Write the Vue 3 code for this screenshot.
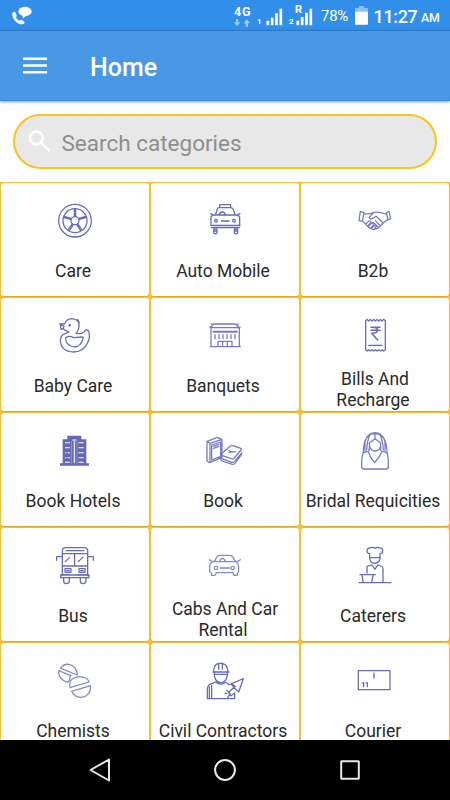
<script setup>
const categories = [
  { name: 'Care', box: '159 60 132 120', icon: 'wheel' },
  { name: 'Auto Mobile', box: '609 60 132 120', icon: 'taxi' },
  { name: 'B2b', box: '384 60 132 120', icon: 'hands' },
  { name: 'Baby Care', box: '159 60 132 120', icon: 'duck' },
  { name: 'Banquets', box: '609 60 132 120', icon: 'hall' },
  { name: 'Bills And Recharge', box: '384 60 132 120', icon: 'bill', two: true },
  { name: 'Book Hotels', box: '159 60 132 120', icon: 'hotel' },
  { name: 'Book', box: '609 60 132 120', icon: 'book' },
  { name: 'Bridal Requicities', box: '384 60 132 120', icon: 'bride' },
  { name: 'Bus', box: '159 60 132 120', icon: 'bus' },
  { name: 'Cabs And Car Rental', box: '609 60 132 120', icon: 'car', two: true },
  { name: 'Caterers', box: '384 60 132 120', icon: 'chef' },
  { name: 'Chemists', box: '159 405 132 120', icon: 'pills' },
  { name: 'Civil Contractors', box: '609 405 132 120', icon: 'worker' },
  { name: 'Courier', box: '384 405 132 120', icon: 'parcel' },
]
</script>

<template>
  <div class="screen">
    <header class="status">
      <svg class="call" viewBox="0 0 60 56">
        <ellipse cx="39" cy="16" rx="20" ry="14" />
        <path d="M31 25 L33 37 L44 28 Z" />
        <path d="M3 18 Q8 14 11 20 L14 28 Q15 31 11 33 Q16 41 25 44 Q28 39 31 42 L37 46 Q39 49 36 53 Q28 57 18 51 Q4 42 1 27 Q0 20 3 18Z" />
      </svg>
      <div class="net">
        <span class="g4">4G</span>
        <svg class="arrows" viewBox="0 0 48 22">
          <path d="M6 0h7v9h6l-9.500 12-9.500-12h6zM35 22h7v-10h6l-9.500-12-9.500 12h6z" />
        </svg>
      </div>
      <span class="sim one">1</span>
      <svg class="bars" viewBox="0 0 50 54">
        <path d="M1 38h8v14h-8zM14 29h8v23h-8zM27 16h8v36h-8zM40 2h8v50h-8z" />
      </svg>
      <span class="sim two">2</span>
      <div class="roam">
        <svg class="bars" viewBox="0 0 50 54">
          <path d="M1 38h8v14h-8zM14 27h8v25h-8zM27 14h8v38h-8zM40 2h8v50h-8z" />
        </svg>
        <span class="r">R</span>
      </div>
      <span class="pct">78%</span>
      <svg class="battery" viewBox="0 0 38 56">
        <path class="dim" d="M12 0h15v6h11v12h-38v-12h12z" />
        <rect y="17" width="38" height="38" rx="2" />
      </svg>
      <span class="time">11:27</span><span class="am">AM</span>
    </header>

    <nav class="appbar">
      <svg class="menu" viewBox="0 0 24 18"><path d="M0 1.700h24M0 8.500h24M0 15.300h24" /></svg>
      <h1>Home</h1>
    </nav>

    <section class="searchwrap">
      <div class="search">
        <svg viewBox="0 0 66 66">
          <circle cx="22" cy="24" r="19" />
          <path d="M36 38 L62 63" />
        </svg>
        <span>Search categories</span>
      </div>
    </section>

    <main class="grid">
      <article v-for="c in categories" :key="c.name" class="card" :class="{ double: c.two }">
        <svg class="icon" :viewBox="c.box">
          <g v-if="c.icon === 'wheel'">
            <circle cx="225" cy="122" r="49" /><circle cx="225" cy="122" r="36" /><circle cx="225" cy="122" r="12" />
            <path d="M223 87v22M227 87v22M190 112l22 6M192 109l22 6M260 112l-22 6M258 109l-22 6M204 150l13-19M208 152l12-18M246 150l-13-19M242 152l-12-18" />
          </g>
          <g v-else-if="c.icon === 'taxi'">
            <path d="M659 83v-9h33v9M646 105l6-18q1-4 6-4h34q5 0 7 4l7 18M632 101l10 5M720 101l-10 5M633 110q4-5 11-5h65q7 0 10 6v25h-86zM633 137h87M634 143h84M657 105q4-9 10-9t11 9M665 123h22" />
            <circle cx="648" cy="122" r="4" /><circle cx="702" cy="122" r="4" />
            <path d="M641 147h10v12q-5 5-10 0zM703 147h10v12q-5 5-10 0zM641 153h10M703 153h10" />
          </g>
          <g v-else-if="c.icon === 'hands'" class="mid">
            <path d="M406 94l11 4-5 25-10-1zM484 99l8-5 5 22-8 4zM418 101q16 3 29-4 15-3 35 5M412 122l11 12q11 14 23 14 14 1 26-17l15-12M447 97l-15 15q3 8 13 2l8-5 19 17q4 7-3 7M423 131l9-8q7-1 5 6l-8 8M431 138l9-9q7 0 4 7l-6 6M441 144l8-8q6 1 3 6l-5 6M451 122l14 14M445 127l14 14" />
          </g>
          <g v-else-if="c.icon === 'duck'">
            <path d="M195 106l-6-5 3-7-13-7 14 0 2-3q6-12 20-13 23 1 22 22 0 9-5 17l-4 5q10 2 17 0 9-3 12-10 6-3 9 4 6 18-3 34-11 26-42 28-38-2-40-34 0-15 14-21l12-5q-7-1-8-5zM181 88l2 15 8-4M197 128q12-8 24 0l26-2q4 0 1 8-6 21-25 22-28-5-26-28zM229 75l8 5M233 73l5 11" />
            <circle cx="209" cy="91" r="2" />
          </g>
          <g v-else-if="c.icon === 'hall'" class="mid">
            <path d="M633 99v56h85v-56M630 155h91M630 95l8 3h76l6-2M640 87h68l9 12M633 97l7-10M634 87l4 3M715 87l-4 5M630 98h90M639 109h73M640 111h71M645 119v12M657 119v12M669 119v12M681 119v12M693 119v12M705 119v12M654 154v-15h14v15M668 154v-15h14v15M682 154v-15h14v15" />
          </g>
          <g v-else-if="c.icon === 'bill'">
            <path d="M422 77l4-4 5 5 5-5 5 5 5-5 5 5 5-5 5 5 5-5 5 5 5-5 5 4v87l-5 4-5-4-5 4-5-4-5 4-5-4-5 4-5-4-5 4-5-4-5 4-4-4zM431 151h40" />
            <path class="bold" d="M438 97h27M438 106h27M441 97q18 0 17 9-2 9-18 9l18 20" />
          </g>
          <g v-else-if="c.icon === 'hotel'">
            <path class="fill" d="M188 88h14v-11h42v11h15v72h8v7h-87v-7h8z" />
            <path class="knock" d="M196 98h13M196 113h13M196 128h2M204 128h5M196 143h2M204 143h5M196 157h13M237 98h13M237 113h13M237 128h13M237 143h13M237 157h13M218 90h10M223 94v64" />
            <path class="seam" d="M215 94v66M231 94v66" />
          </g>
          <g v-else-if="c.icon === 'book'" class="mid">
            <path d="M621 94l31-12 14 7v53l-37 16-8-5zM621 94l9 6 34-11M630 100v56M635 105l27-9v43l-27 11zM640 109l17-6M640 115l17-6" />
            <path d="M664 132l27-24q3-2 8-1l23 8q4 2 1 5l-20 24q-4 4-9 2l-27-9q-6-3-3-5zM687 127l19-2M687 122q4 4 9 4M664 138q-5 5 2 8l29 11q5 1 9-3l21-25M663 145q-2 7 4 8l30 10q6 1 9-4l19-26" />
          </g>
          <g v-else-if="c.icon === 'bride'" class="mid">
            <path d="M410 170V154q0-10 5-28 1-56 35-58 34 2 36 58 4 20 4 28v16q0 7-7 7h-66q-7 0-7-7zM415 129q5-4 16-5 2-4 2-13M485 129q-5-4-16-5-3-4-2-13M420 124V96q5-24 30-25 25 1 30 25v28M433 99l17-13 17 13q2 23-17 24-18-2-17-24M450 86V70M437 71q-10 15-12 49M463 71q10 15 12 49M431 128q4 15 18 30 14-15 20-30" />
          </g>
          <g v-else-if="c.icon === 'bus'">
            <path d="M187 152V77q1-9 9-9h58q8 0 9 9v75M187 86h76M188 123h74M224 87v36M199 77h52M187 95h-17v11M263 95h17v11M182 150h85v8h-85zM196 110l13-13M235 110l13-13M195 131h18v11h-18zM237 131h18v11h-18zM200 137h8M242 137h8M187 149h20M233 149h30M191 159v9q0 8 8 8t9-8v-9M241 159v9q0 8 8 8t9-8v-9" />
          </g>
          <g v-else-if="c.icon === 'car'" class="light">
            <path d="M644 110l7-13q3-6 9-6h31q6 0 9 6l8 13M629 104q9 7 21 6h54q9 1 18-6M638 111q-8 4-8 14v15q2 3 6 4v7h10l4-8h49l4 8h10v-7q3-1 4-5v-14q-1-11-8-15" transform="translate(-1 0)" />
            <path d="M660 109q0-7 7-9 8 1 8 9M661 129h28" />
            <circle cx="648" cy="129" r="5" /><circle cx="698" cy="129" r="5" />
          </g>
          <g v-else-if="c.icon === 'chef'">
            <path d="M434 101V86q-8-1-8-9 1-9 10-8 8-4 14 1 7-5 14-1 9-1 9 8 0 8-8 9v15q-1 12-15 14-14-1-16-14M434 98h31M426 144v-16q0-6 7-6l8-2 9 13 8-13 10 3q6 2 6 8v41M402 173h96M405 149h46M411 151l4 22M444 151l-4 22" />
          </g>
          <g v-else-if="c.icon === 'pills'" class="light">
            <path d="M182 430q8-14 25-12 23 4 25 32zM176 437l37 15q-5 6-4 13l-4 6q-17-1-26-17-4-9-3-17zM210 488q-6-30 28-33 25 1 29 16zM215 499l57-17q1 31-28 35-21 1-29-18z" />
          </g>
          <g v-else-if="c.icon === 'worker'">
            <path d="M641 441q0-23 15-26h11q17 4 16 26M639 441h48M643 441v10q2 20 20 22 16-2 19-22v-10M643 448h40M656 415v18M667 415v18M622 521v-28q0-15 16-18l9-4q14 12 30 1l11 7 10-2M622 521h82M628 521v-35M635 521v-39M675 505h6M693 477l37-16-14 40-8-8zM702 487l-14 13q-2 7 5 12 6-4 11-8v17M680 496l11 11M706 484l-9-5M690 506l-8 15" />
          </g>
          <g v-else>
            <path d="M400 437h95v57h-95zM447 444v15M412 474l4-1v12M423 474l4-1v12" />
          </g>
        </svg>
        <p>{{ c.name }}</p>
      </article>
    </main>

    <footer class="navbar">
      <svg viewBox="0 0 26 26"><path d="M22 2.500v21L3.500 13z" /></svg>
      <svg viewBox="0 0 26 26"><circle cx="13" cy="13" r="9.900" /></svg>
      <svg viewBox="0 0 26 26"><rect x="4.200" y="4.200" width="17.600" height="17.600" rx=".5" /></svg>
    </footer>
  </div>
</template>

<style>
body { margin: 0; }
</style>

<style scoped>
.screen {
  width: 450px;
  height: 800px;
  display: flex;
  flex-direction: column;
  overflow: hidden;
  background: #fff;
  font-family: Roboto, "Liberation Sans", sans-serif;
}
.status {
  box-sizing: border-box;
  height: 31px;
  flex: none;
  display: flex;
  align-items: flex-start;
  background: #318fe9;
  border-bottom: 1px solid #2c80d1;
  padding-left: 12px;
  color: #fff;
  line-height: 1;
  white-space: nowrap;
}
.status svg { fill: #fff; flex: none; display: block; }
.status .call { width: 20px; height: 19px; margin-top: 6px; }
.net { width: 22px; margin: 6px 0 0 202px; }
.g4 { display: block; font-size: 12.500px; font-weight: 700; letter-spacing: .8px; height: 13px; }
.status .arrows { width: 16px; height: 8px; fill: #9dcbf5; }
.sim { font-size: 8px; font-weight: 700; margin-top: 18px; width: 5px; }
.one { margin-left: 1px; }
.bars { width: 17px; height: 18px; margin: 8px 0 0 4px; }
.two { margin-left: 6px; }
.roam { position: relative; }
.roam .bars { margin-left: 2px; }
.r { position: absolute; left: 1px; top: 4px; font-size: 11px; font-weight: 700; }
.pct { font-size: 15px; margin: 9px 0 0 8px; width: 28px; letter-spacing: -.3px; }
.battery { width: 13px; height: 19px; margin: 6px 0 0 6px; }
.battery .dim { fill: #8cc1f3; }
.time { font-size: 18px; font-weight: 500; letter-spacing: -.35px; margin: 8px 0 0 5.500px; width: 44px; }
.am { font-size: 12.300px; font-weight: 500; letter-spacing: -.2px; margin: 12px 0 0 3.500px; }
.appbar {
  box-sizing: border-box;
  height: 70px;
  flex: none;
  display: flex;
  align-items: center;
  padding: 1px 0 0 23px;
  background: #4998e6;
  border-bottom: 1px solid #318fe9;
  box-shadow: 0 1px 3px rgba(0, 0, 0, .4);
  z-index: 1;
}
.menu { width: 24px; height: 18px; fill: none; stroke: #fff; stroke-width: 2.500; }
h1 { font-size: 25px; line-height: 30px; font-weight: 500; color: #fff; margin: 4px 0 0 43px; }
.searchwrap { flex: none; height: 81px; box-sizing: border-box; padding: 13px 13px 0 12.500px; background: #fff; }
.search {
  box-sizing: border-box;
  height: 55px;
  display: flex;
  align-items: center;
  border: 2px solid #fcc31d;
  border-radius: 28px;
  background: #e8e8e8;
  color: #8e8e8e;
  font-size: 22.500px;
  padding: 2px 0 0 14px;
}
.search svg { width: 22px; height: 22px; fill: none; stroke: #fff; stroke-width: 8; margin: -4px 11px 0 0; }
.grid {
  flex: 1;
  min-height: 0;
  overflow: hidden;
  display: grid;
  grid-template-columns: repeat(3, 148px);
  grid-auto-rows: 113px;
  gap: 2px;
  padding: 1px;
  background: #fcc43a;
}
.card {
  box-sizing: border-box;
  display: flex;
  flex-direction: column;
  align-items: center;
  padding-top: 17px;
  background: #fff;
  border-radius: 3px;
  box-shadow: 0 0 1px #eaad00, 0 1px 1px rgba(190, 145, 0, .5);
}
.icon {
  width: 44px;
  height: 40px;
  flex: none;
  fill: none;
  stroke: #6769b9;
  stroke-width: 3.800;
  stroke-linecap: round;
  stroke-linejoin: round;
}
.icon .light { stroke: #8789c9; }
.icon .mid { stroke: #7779c1; }
.icon .bold { stroke-width: 4.500; }
.icon .fill { fill: #6567b8; stroke: none; }
.icon .knock { stroke: #fff; stroke-width: 3.200; }
.icon .seam { stroke: #a9aad9; stroke-width: 2; }
.card p {
  margin: 21px 0 0 -4px;
  font-size: 17.500px;
  line-height: 20px;
  color: #2a2a2a;
  text-align: center;
}
.double p { width: 120px; margin-top: 14px; line-height: 20.500px; text-indent: 4px; }
.navbar {
  height: 60px;
  flex: none;
  display: flex;
  justify-content: center;
  align-items: center;
  gap: 99px;
  background: #000;
}
.navbar svg { width: 26px; height: 26px; fill: none; stroke: #e8e8e8; stroke-width: 2; stroke-linejoin: round; }
</style>
